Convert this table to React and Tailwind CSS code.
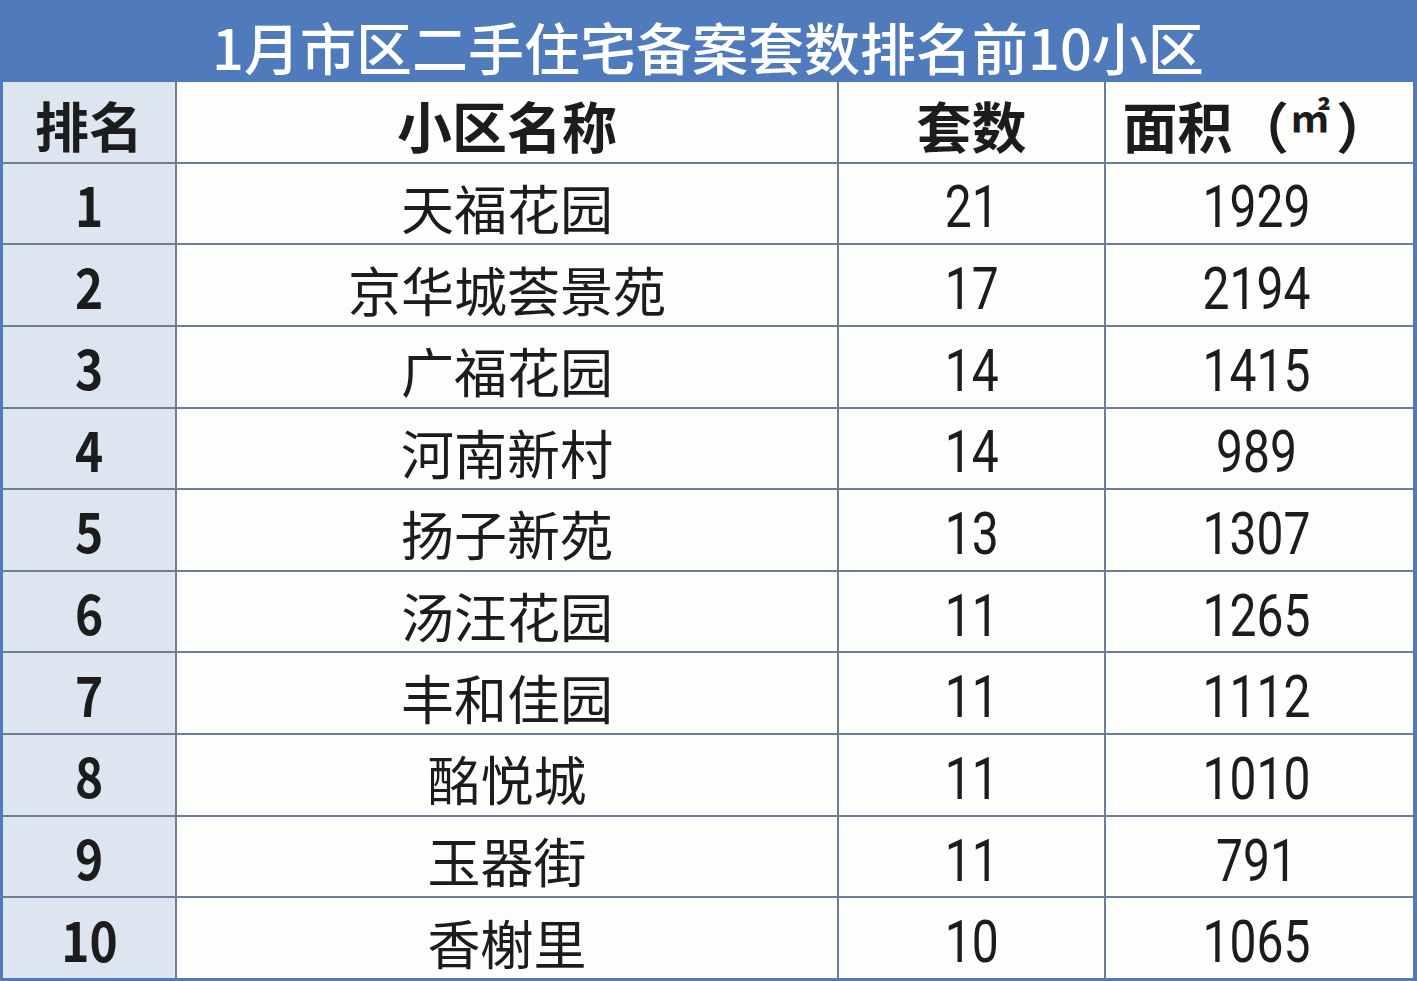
import React from 'react'

const rows = [
  ['1', '天福花园', '21', '1929'],
  ['2', '京华城荟景苑', '17', '2194'],
  ['3', '广福花园', '14', '1415'],
  ['4', '河南新村', '14', '989'],
  ['5', '扬子新苑', '13', '1307'],
  ['6', '汤汪花园', '11', '1265'],
  ['7', '丰和佳园', '11', '1112'],
  ['8', '酩悦城', '11', '1010'],
  ['9', '玉器街', '11', '791'],
  ['10', '香榭里', '10', '1065'],
]

// thin, narrow digits like the source sheet
const Num = ({ children }) => (
  <span className="inline-block font-['Roboto',sans-serif] font-normal scale-x-[0.8]">{children}</span>
)

export default function App() {
  return (
    <div className="w-[1417px] h-[981px] bg-[#4f7bbd] flex flex-col pl-[3px] pr-[4px] pb-[3px] font-['Noto_Sans_CJK_SC',sans-serif]">
      {/* Title */}
      <div className="h-[82px] shrink-0 flex items-center justify-center pt-[10px] text-white text-[56px] font-medium leading-none">
        1月市区二手住宅备案套数排名前10小区
      </div>

      {/* Table */}
      <div className="flex-1 grid grid-cols-[172px_660px_265px_1fr] grid-rows-11 gap-[2px] bg-[#6b7d97] text-[#1c1c1c]">
        <div className="bg-[#dde5f1] flex items-center justify-center text-[54px] font-bold leading-none pt-[6px]">排名</div>
        <div className="bg-[#fdfdfb] flex items-center justify-center text-[55px] font-bold leading-none pt-[6px]">小区名称</div>
        <div className="bg-[#fdfdfb] flex items-center justify-center text-[55px] font-bold leading-none pt-[6px]">套数</div>
        <div className="bg-[#fdfdfb] flex items-center justify-center text-[55px] font-bold leading-none pt-[6px] pr-[33px] [font-feature-settings:'halt']">
          <span>面积</span>
          <span className="ml-[29px]">（</span>
          <span className="text-[40px] ml-[1px] mb-[20px]">㎡</span>
          <span className="ml-[6px]">）</span>
        </div>

        {rows.map(r => (
          <React.Fragment key={r[0]}>
            <div className="bg-[#dde5f1] flex items-center justify-center text-[55px] font-bold leading-none">
              <span className="inline-block scale-x-[0.87]">{r[0]}</span>
            </div>
            <div className="bg-[#fdfdfb] flex items-center justify-center text-[53px] font-normal leading-none pt-[8px]">{r[1]}</div>
            <div className="bg-[#fdfdfb] flex items-center justify-center text-[60px] leading-none pt-[8px]">
              <Num>{r[2]}</Num>
            </div>
            <div className="bg-[#fdfdfb] flex items-center justify-center text-[60px] leading-none pt-[8px] pr-[6px]">
              <Num>{r[3]}</Num>
            </div>
          </React.Fragment>
        ))}
      </div>
    </div>
  )
}
